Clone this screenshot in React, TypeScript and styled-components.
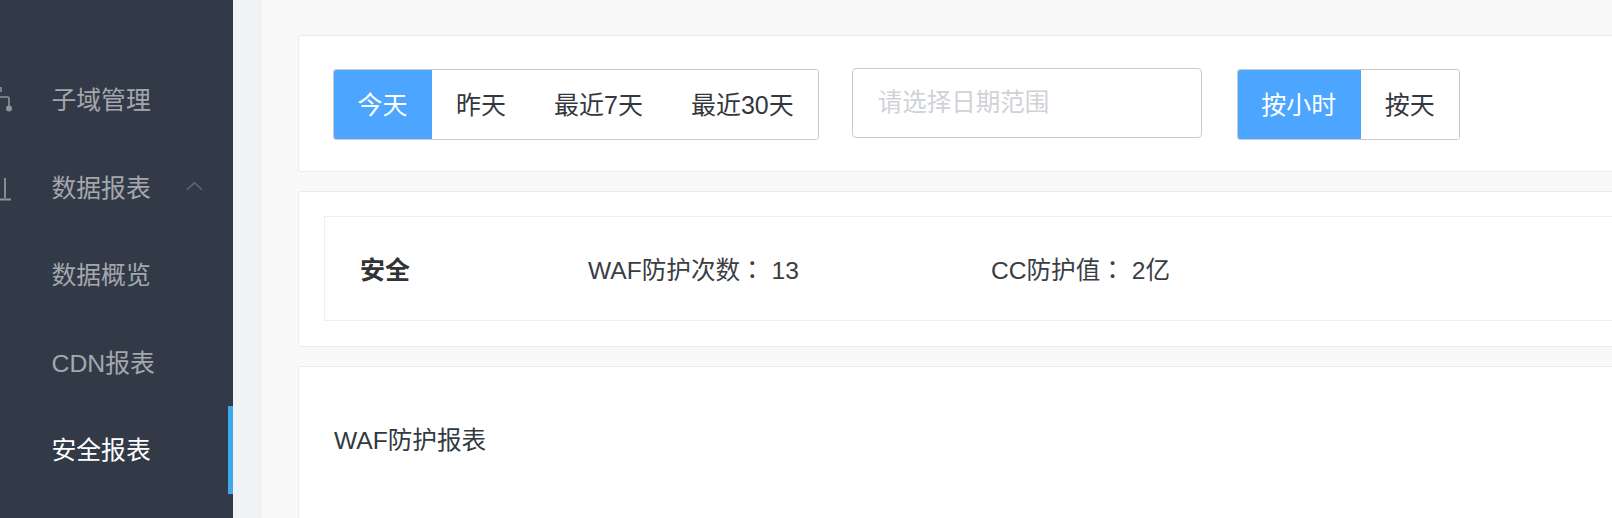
import React from 'react';
import styled, { createGlobalStyle } from 'styled-components';

const GlobalStyle = createGlobalStyle`
	html, body {
		margin: 0;
		padding: 0;
		background: #f9f9f9;
	}
	body {
		font-family: "Liberation Sans", "Noto Sans CJK SC", sans-serif;
		font-size: 25px;
		overflow: hidden;
	}
`;

const menuItems = [
	{ label: '子域管理', icon: 'tree' },
	{ label: '数据报表', icon: 'chart', open: true },
	{ label: '数据概览' },
	{ label: 'CDN报表' },
	{ label: '安全报表', active: true },
];

const TreeIcon = () => (
	<MenuIconSvg viewBox="0 0 24 24" fill="none" stroke="#8f949c" strokeWidth="1.6">
		<path d="M15 -2v5" />
		<path d="M9 8h12.5a1.5 1.5 0 0 1 1.5 1.5V17" />
		<circle cx="23" cy="19.5" r="3" fill="#8f949c" stroke="none" />
	</MenuIconSvg>
);

const ChartIcon = () => (
	<MenuIconSvg viewBox="0 0 24 24" fill="none" stroke="#8f949c" strokeWidth="1.8">
		<path d="M19 1v20" />
		<path d="M13 22.5h12" strokeWidth="2" />
	</MenuIconSvg>
);

export default function App() {
	return (
		<>
			<GlobalStyle />
			<Page>
				<Sidebar>
					{menuItems.map((item) => (
						<MenuRow key={item.label} active={item.active}>
							<IconSlot>
								{item.icon === 'tree' && <TreeIcon />}
								{item.icon === 'chart' && <ChartIcon />}
							</IconSlot>
							{item.label}
							{item.open && (
								<Chevron viewBox="0 0 18 10" fill="none" stroke="#626875" strokeWidth="1.6">
									<path d="M1 9l8-7.5L17 9" />
								</Chevron>
							)}
						</MenuRow>
					))}
				</Sidebar>
				<Gutter />
				<Main>
					<Card height={137}>
						<Toolbar>
							<SegmentGroup>
								<Segment active>今天</Segment>
								<Segment>昨天</Segment>
								<Segment>最近7天</Segment>
								<Segment>最近30天</Segment>
							</SegmentGroup>
							<DateInput>请选择日期范围</DateInput>
							<SegmentGroup>
								<Segment active>按小时</Segment>
								<Segment>按天</Segment>
							</SegmentGroup>
						</Toolbar>
					</Card>
					<StatsCard>
						<StatsBox>
							<StatsTitle>安全</StatsTitle>
							<Stat width={403}>
								WAF防护次数<Colon>：</Colon>&nbsp;13
							</Stat>
							<Stat>
								CC防护值<Colon>：</Colon>&nbsp;2亿
							</Stat>
						</StatsBox>
					</StatsCard>
					<ReportCard>
						<ReportTitle>WAF防护报表</ReportTitle>
					</ReportCard>
				</Main>
			</Page>
		</>
	);
}

const Page = styled.div`
	display: flex;
	width: 1612px;
	height: 518px;
	overflow: hidden;
`;

const Sidebar = styled.nav`
	flex: 0 0 233px;
	box-sizing: border-box;
	padding-top: 56px;
	background: #333a47;
	font-size: 24.8px;
	overflow: hidden;
`;

const MenuRow = styled.div<{ active?: boolean }>`
	display: flex;
	align-items: center;
	height: 87.5px;
	box-sizing: border-box;
	padding-bottom: 3px;
	color: ${({ active }) => (active ? '#ffffff' : '#a3a7ae')};
	border-right: 5px solid ${({ active }) => (active ? '#3fa9f0' : 'transparent')};
`;

const IconSlot = styled.span`
	flex: 0 0 51.5px;
	height: 24px;
`;

const MenuIconSvg = styled.svg`
	display: block;
	width: 24px;
	height: 30px;
	margin-left: -14px;
	overflow: visible;
`;

const Chevron = styled.svg`
	width: 17px;
	height: 10px;
	margin-left: 35px;
`;

const Gutter = styled.div`
	flex: 0 0 29px;
	background: #f1f2f3;
`;

const Main = styled.main`
	flex: 1;
	min-width: 0;
	box-sizing: border-box;
	padding: 35px 0 0 36px;
	background: #f9f9f9;
	overflow: hidden;
`;

const Card = styled.section<{ height?: number }>`
	box-sizing: border-box;
	height: ${({ height }) => (height ? `${height}px` : 'auto')};
	margin-right: -10px;
	background: #ffffff;
	border: 1px solid #ececee;
	border-radius: 3px;
`;

const Toolbar = styled.div`
	display: flex;
	align-items: center;
	gap: 33px;
	box-sizing: border-box;
	height: 100%;
	padding: 2px 0 0 34px;
`;

const SegmentGroup = styled.div`
	display: flex;
	height: 71px;
	box-sizing: border-box;
	border: 1px solid #c8cacd;
	border-radius: 3px;
	overflow: hidden;
`;

const Segment = styled.div<{ active?: boolean }>`
	display: flex;
	align-items: center;
	padding: 0 ${({ active }) => (active ? '24.5px' : '24px')} 4px;
	margin: -1px 0 -1px ${({ active }) => (active ? '-1px' : '0')};
	background: ${({ active }) => (active ? '#4ca6ff' : '#ffffff')};
	color: ${({ active }) => (active ? '#ffffff' : '#333840')};
`;

const DateInput = styled.div`
	display: flex;
	align-items: center;
	box-sizing: border-box;
	width: 350px;
	height: 70px;
	padding: 0 0 5px 25px;
	margin: -3px 2px 0 0;
	border: 1px solid #c8cacd;
	border-radius: 4px;
	font-size: 24.5px;
	color: #cfd2d6;
`;

const StatsCard = styled(Card)`
	height: 156px;
	margin-top: 19px;
	padding: 24px 0 0 25px;
`;

const StatsBox = styled.div`
	display: flex;
	align-items: center;
	height: 105px;
	box-sizing: border-box;
	padding: 0 0 1px 35px;
	border: 1px solid #eeeeef;
	font-size: 24.6px;
	color: #3a3d42;
`;

const StatsTitle = styled.strong`
	flex: 0 0 228px;
	font-size: 25px;
	font-weight: 700;
	color: #333333;
`;

const Stat = styled.div<{ width?: number }>`
	flex: 0 0 ${({ width }) => (width ? `${width}px` : 'auto')};
`;

const Colon = styled.span`
	font-family: "Noto Sans CJK TC", sans-serif;
`;

const ReportCard = styled(Card)`
	height: 200px;
	margin-top: 19px;
	padding: 56px 0 0 35px;
`;

const ReportTitle = styled.h3`
	margin: 0;
	font-size: 24.6px;
	font-weight: 400;
	line-height: 36px;
	color: #303a42;
`;
